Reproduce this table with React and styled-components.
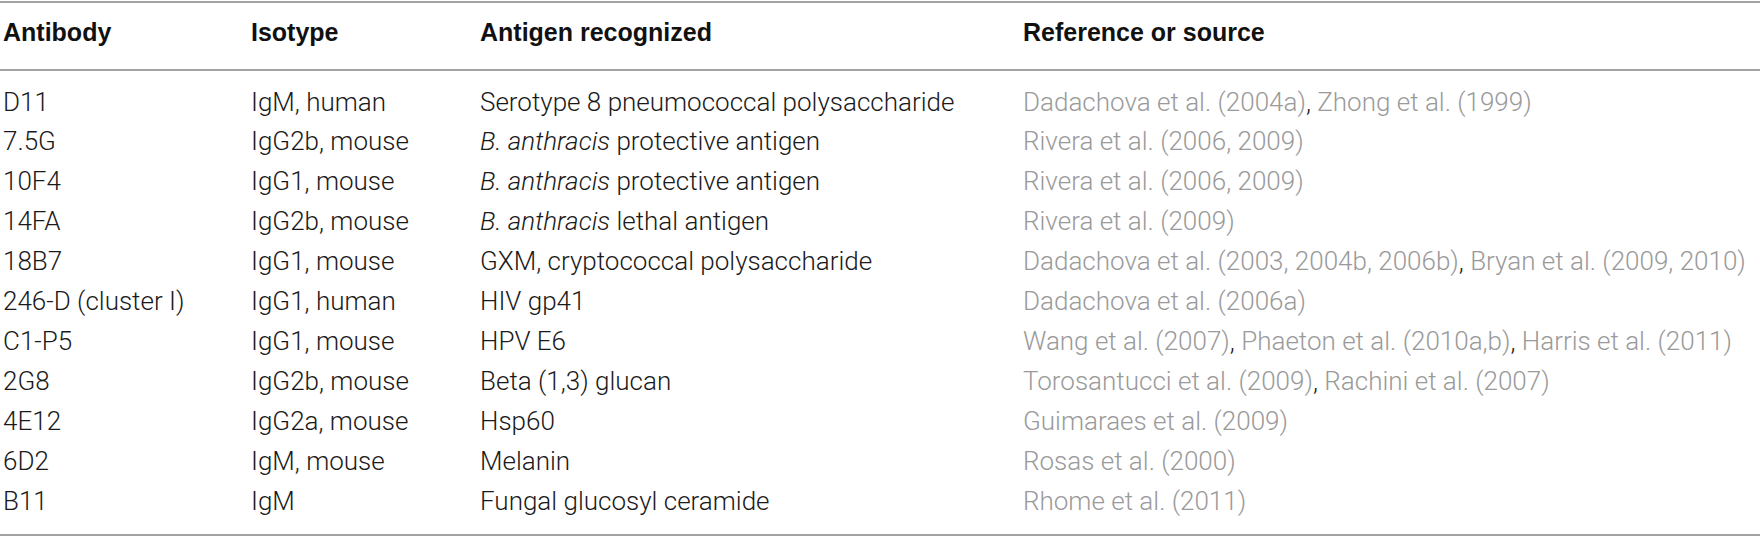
import styled, { createGlobalStyle } from 'styled-components';

const GlobalStyle = createGlobalStyle`
  html, body {
    margin: 0;
    padding: 0;
    background: #ffffff;
  }
  body {
    font-family: Roboto, "Liberation Sans", Arial, sans-serif;
    overflow: hidden;
  }
`;

const rows = [
  { id: 'D11', isotype: 'IgM, human', antigen: ['Serotype 8 pneumococcal polysaccharide'], refs: ['Dadachova et al. (2004a)', 'Zhong et al. (1999)'] },
  { id: '7.5G', isotype: 'IgG2b, mouse', antigen: ['B. anthracis', ' protective antigen'], refs: ['Rivera et al. (2006, 2009)'] },
  { id: '10F4', isotype: 'IgG1, mouse', antigen: ['B. anthracis', ' protective antigen'], refs: ['Rivera et al. (2006, 2009)'] },
  { id: '14FA', isotype: 'IgG2b, mouse', antigen: ['B. anthracis', ' lethal antigen'], refs: ['Rivera et al. (2009)'] },
  { id: '18B7', isotype: 'IgG1, mouse', antigen: ['GXM, cryptococcal polysaccharide'], refs: ['Dadachova et al. (2003, 2004b, 2006b)', 'Bryan et al. (2009, 2010)'] },
  { id: '246-D (cluster I)', isotype: 'IgG1, human', antigen: ['HIV gp41'], refs: ['Dadachova et al. (2006a)'] },
  { id: 'C1-P5', isotype: 'IgG1, mouse', antigen: ['HPV E6'], refs: ['Wang et al. (2007)', 'Phaeton et al. (2010a,b)', 'Harris et al. (2011)'] },
  { id: '2G8', isotype: 'IgG2b, mouse', antigen: ['Beta (1,3) glucan'], refs: ['Torosantucci et al. (2009)', 'Rachini et al. (2007)'] },
  { id: '4E12', isotype: 'IgG2a, mouse', antigen: ['Hsp60'], refs: ['Guimaraes et al. (2009)'] },
  { id: '6D2', isotype: 'IgM, mouse', antigen: ['Melanin'], refs: ['Rosas et al. (2000)'] },
  { id: 'B11', isotype: 'IgM', antigen: ['Fungal glucosyl ceramide'], refs: ['Rhome et al. (2011)'] },
];

const Wrapper = styled.div`
  width: 1760px;
  height: 537px;
  padding-top: 1px;
  box-sizing: border-box;
  overflow: hidden;
`;

const Table = styled.table`
  width: 1760px;
  border-collapse: collapse;
  table-layout: fixed;
  border-top: 2px solid #a2a2a2;
  border-bottom: 2px solid #a2a2a2;
`;

const Col = styled.col`
  width: ${(p) => p.$w}px;
`;

const HeadCell = styled.th`
  text-align: left;
  font-family: "Liberation Sans", Arial, sans-serif;
  font-weight: 700;
  font-size: 25px;
  color: #111;
  height: 58px;
  padding: 0 0 8px ${(p) => p.$pl || 0}px;
  border-bottom: 2px solid #a2a2a2;
  white-space: nowrap;
  vertical-align: middle;
`;

const BodyRow = styled.tr`
  td {
    height: 40px;
  }
  &:first-child td {
    height: 51px;
    padding-top: 11px;
  }
  &:last-child td {
    height: 54px;
    padding-bottom: 14px;
  }
`;

const Cell = styled.td`
  font-size: 26px;
  font-weight: 300;
  color: ${(p) => (p.$muted ? '#9a9a9a' : '#1a1a1a')};
  padding: 0 0 0 ${(p) => p.$pl || 0}px;
  white-space: nowrap;
  overflow: hidden;
  vertical-align: middle;
  box-sizing: border-box;
`;

const Sep = styled.span`
  color: #1a1a1a;
`;

const Italic = styled.i`
  font-style: italic;
`;

function Antigen({ parts }) {
  if (parts.length === 1) return parts[0];
  return (
    <>
      <Italic>{parts[0]}</Italic>
      {parts[1]}
    </>
  );
}

function Refs({ refs }) {
  return refs.map((r, i) => (
    <span key={r}>
      {i > 0 && <Sep>, </Sep>}
      {r}
    </span>
  ));
}

export default function App() {
  return (
    <Wrapper>
      <GlobalStyle />
      <Table>
        <colgroup>
          <Col $w={251} />
          <Col $w={229} />
          <Col $w={543} />
          <Col $w={737} />
        </colgroup>
        <thead>
          <tr>
            <HeadCell $pl={3}>Antibody</HeadCell>
            <HeadCell>Isotype</HeadCell>
            <HeadCell>Antigen recognized</HeadCell>
            <HeadCell>Reference or source</HeadCell>
          </tr>
        </thead>
        <tbody>
          {rows.map((row) => (
            <BodyRow key={row.id}>
              <Cell $pl={3}>{row.id}</Cell>
              <Cell>{row.isotype}</Cell>
              <Cell>
                <Antigen parts={row.antigen} />
              </Cell>
              <Cell $muted>
                <Refs refs={row.refs} />
              </Cell>
            </BodyRow>
          ))}
        </tbody>
      </Table>
    </Wrapper>
  );
}
